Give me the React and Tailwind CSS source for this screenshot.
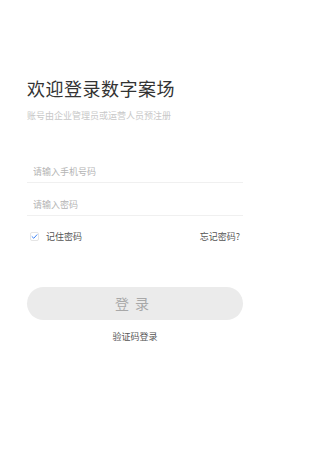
import React from "react";

export default function App() {
  return (
    <div
      className="min-h-[450px] w-[270px] bg-white px-[27px] pt-[76px]"
      style={{ fontFamily: '"Noto Sans CJK SC", "Noto Sans", sans-serif' }}
    >
      <h1 className="text-[18px] leading-[24px] text-[#333] font-normal tracking-[0.5px]">
        欢迎登录数字案场
      </h1>
      <p className="mt-[10px] text-[9px] leading-[12px] text-[#c8c8c8]">
        账号由企业管理员或运营人员预注册
      </p>

      {/* form */}
      <div className="mt-[28px]">
        <div className="h-[33px] flex items-end pb-[4px] border-b border-[#f0f0f0] px-[6px]">
          <input
            className="w-full outline-none text-[9px] leading-[13px] text-[#333] placeholder:text-[#b4b4b4] bg-transparent"
            placeholder="请输入手机号码"
          />
        </div>
        <div className="h-[33px] flex items-end pb-[4px] border-b border-[#f0f0f0] px-[6px]">
          <input
            type="password"
            className="w-full outline-none text-[9px] leading-[13px] text-[#333] placeholder:text-[#b4b4b4] bg-transparent"
            placeholder="请输入密码"
          />
        </div>
        <div className="mt-[14px] flex items-center justify-between px-[3px]">
          <label className="flex items-center gap-[7px] text-[9px] text-[#555]">
            <span className="w-[9px] h-[9px] border border-[#e5e5e5] rounded-[2px] flex items-center justify-center">
              <svg width="7" height="7" viewBox="0 0 10 10">
                <path d="M1.5 5.2 L4 7.5 L8.5 2.5" fill="none" stroke="#3b82f6" strokeWidth="1.4" strokeLinecap="round" strokeLinejoin="round" />
              </svg>
            </span>
            记住密码
          </label>
          <span className="text-[9px] text-[#555]">忘记密码?</span>
        </div>
      </div>

      <button className="mt-[43px] w-full h-[33px] rounded-full bg-[#ebebeb] text-[14px] text-[#a8a8a8] tracking-[6px]">
        登录
      </button>
      <div className="mt-[10px] text-center text-[9px] text-[#555]">验证码登录</div>
    </div>
  );
}
